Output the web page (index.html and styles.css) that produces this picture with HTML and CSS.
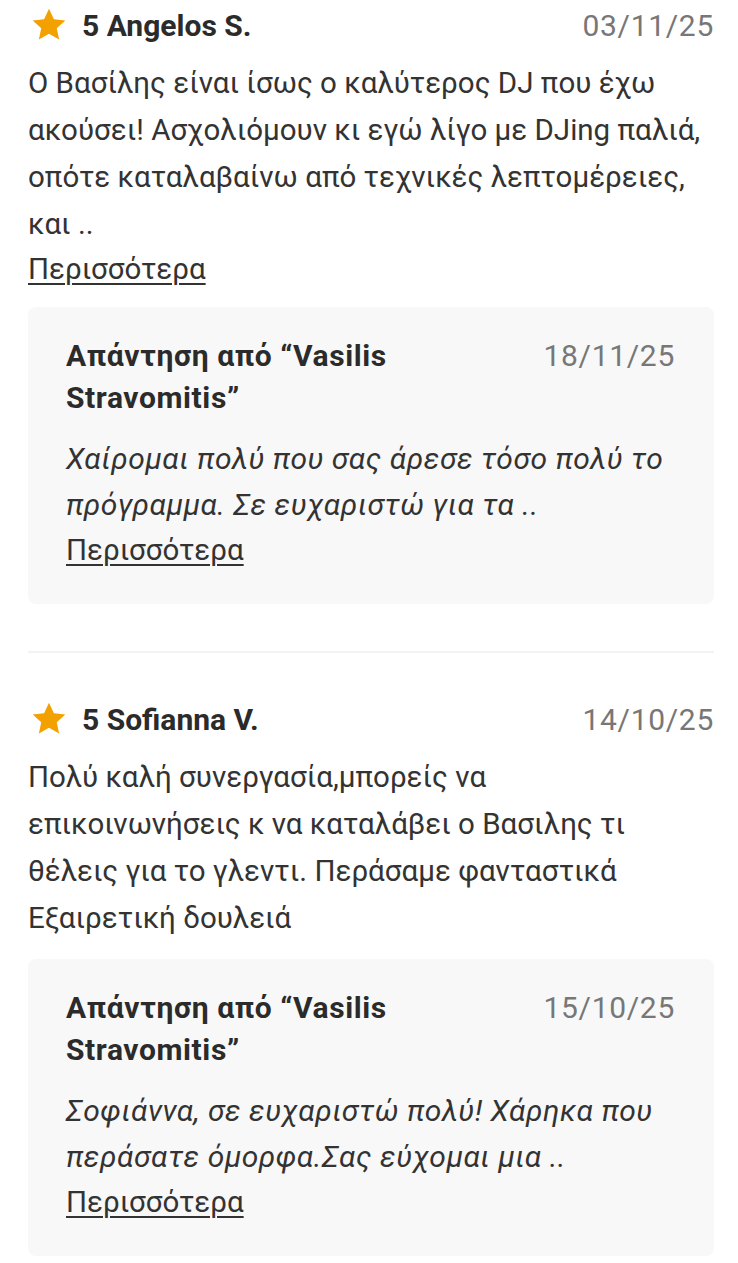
FILE: index.html
```html
<!DOCTYPE html>
<html lang="el">
<head>
  <meta charset="UTF-8" />
  <meta name="viewport" content="width=device-width, initial-scale=1.0" />
  <title>Κριτικές</title>
  <link rel="stylesheet" href="styles.css">
</head>
<body>
  <div class="reviews">

    <div class="review">
      <div class="review-head">
        <div class="who">
          <svg class="star" viewBox="0 0 24 24" width="38" height="38"><path d="M12 1.8l3.1 6.6 7.2.8-5.4 4.9 1.5 7.1L12 17.6l-6.4 3.6 1.5-7.1-5.4-4.9 7.2-.8z" fill="#f2a100"/></svg>
          <span class="name">5 Angelos S.</span>
        </div>
        <span class="date">03/11/25</span>
      </div>
      <p class="text">Ο Βασίλης είναι ίσως ο καλύτερος DJ που έχω ακούσει! Ασχολιόμουν κι εγώ λίγο με DJing παλιά, οπότε καταλαβαίνω από τεχνικές λεπτομέρειες, και ..</p>
      <a class="more" href="#">Περισσότερα</a>

      <div class="reply">
        <div class="reply-head">
          <span class="reply-title">Απάντηση από “Vasilis Stravomitis”</span>
          <span class="date">18/11/25</span>
        </div>
        <p class="reply-text">Χαίρομαι πολύ που σας άρεσε τόσο πολύ το πρόγραμμα. Σε ευχαριστώ για τα ..</p>
        <a class="more" href="#">Περισσότερα</a>
      </div>
    </div>

    <div class="review">
      <div class="review-head">
        <div class="who">
          <svg class="star" viewBox="0 0 24 24" width="38" height="38"><path d="M12 1.8l3.1 6.6 7.2.8-5.4 4.9 1.5 7.1L12 17.6l-6.4 3.6 1.5-7.1-5.4-4.9 7.2-.8z" fill="#f2a100"/></svg>
          <span class="name">5 Sofianna V.</span>
        </div>
        <span class="date">14/10/25</span>
      </div>
      <p class="text">Πολύ καλή συνεργασία,μπορείς να<br>επικοινωνήσεις κ να καταλάβει ο Βασιλης τι<br>θέλεις για το γλεντι. Περάσαμε φανταστικά<br>Εξαιρετική δουλειά</p>

      <div class="reply">
        <div class="reply-head">
          <span class="reply-title">Απάντηση από “Vasilis Stravomitis”</span>
          <span class="date">15/10/25</span>
        </div>
        <p class="reply-text">Σοφιάννα, σε ευχαριστώ πολύ! Χάρηκα που περάσατε όμορφα.Σας εύχομαι μια ..</p>
        <a class="more" href="#">Περισσότερα</a>
      </div>
    </div>

  </div>
</body>
</html>
```

FILE: styles.css
```css
* {
  margin: 0;
  padding: 0;
  box-sizing: border-box;
}

body {
  background: #fff;
  font-family: Roboto, "Liberation Sans", sans-serif;
  color: #333;
}

.reviews {
  padding: 0 24px 0 28px;
}

.review {
  padding: 6px 0 47px;
}

.review + .review {
  border-top: 2px solid #f3f3f3;
  padding-top: 47px;
}

.review-head {
  display: flex;
  justify-content: space-between;
  align-items: center;
  height: 38px;
  margin-bottom: 16px;
}

.who {
  display: flex;
  align-items: center;
  gap: 14px;
}

.star {
  margin-left: 2px;
}

.name {
  font-size: 30px;
  font-weight: 700;
  color: #2b2b2b;
}

.date {
  font-size: 30px;
  letter-spacing: 0.7px;
  color: #777;
}

.text {
  font-size: 29.5px;
  line-height: 47px;
  color: #333;
}

.more {
  display: inline-block;
  font-size: 29.5px;
  line-height: 42px;
  color: #333;
  text-decoration: underline;
  text-decoration-thickness: 2px;
  text-underline-offset: 4px;
}

.reply {
  background: #f8f8f8;
  border-radius: 8px;
  margin-top: 17px;
  padding: 28px 39px 32px 38px;
}

.reply .more {
  line-height: 44px;
}

.reply-head {
  display: flex;
  justify-content: space-between;
  align-items: flex-start;
  margin-bottom: 17px;
}

.reply-title {
  font-size: 30px;
  font-weight: 700;
  letter-spacing: 0.6px;
  line-height: 42px;
  color: #2b2b2b;
  max-width: 360px;
}

.reply .date {
  line-height: 42px;
}

.reply-text {
  font-size: 30px;
  font-style: italic;
  letter-spacing: 0.5px;
  line-height: 46px;
  color: #333;
}
```
